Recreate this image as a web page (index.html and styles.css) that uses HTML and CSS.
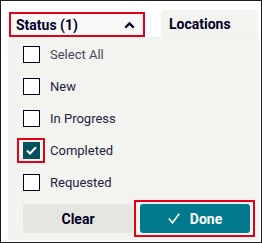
FILE: index.html
```html
<!DOCTYPE html>
<html lang="en">
<head>
    <meta charset="UTF-8">
    <title>Status filter</title>
    <link rel="stylesheet" href="styles.css">
</head>
<body>
    <div class="frame">
        <!-- Filter tabs -->
        <div class="tabs">
            <div class="tab tab-open">
                <span>Status (1)</span>
                <svg class="chevron" width="11" height="8" viewBox="0 0 11 8">
                    <path d="M1.3 6.6 L5.5 2.4 L9.7 6.6" fill="none" stroke="#000028" stroke-width="2.2"/>
                </svg>
            </div>
            <div class="tab tab-closed">Locations</div>
        </div>

        <!-- Dropdown panel -->
        <div class="panel">
            <label class="row">
                <span class="box"></span>
                <span class="label muted">Select All</span>
            </label>
            <label class="row">
                <span class="box"></span>
                <span class="label">New</span>
            </label>
            <label class="row">
                <span class="box"></span>
                <span class="label">In Progress</span>
            </label>
            <label class="row">
                <span class="box checked marked">
                    <svg width="11" height="9" viewBox="0 0 11 9">
                        <path d="M1 4.5 L4 7.5 L10 1.2" fill="none" stroke="#fff" stroke-width="2"/>
                    </svg>
                </span>
                <span class="label">Completed</span>
            </label>
            <label class="row">
                <span class="box"></span>
                <span class="label">Requested</span>
            </label>

            <div class="actions">
                <button class="btn btn-clear">Clear</button>
                <span class="done-wrap">
                    <button class="btn btn-done">
                        <svg width="12" height="11" viewBox="0 0 12 11">
                            <path d="M0.8 5.6 L4.4 9.8 L11.2 0.8" fill="none" stroke="#fff" stroke-width="1.6"/>
                        </svg>
                        Done
                    </button>
                </span>
            </div>
        </div>
    </div>
</body>
</html>
```

FILE: styles.css
```css
body {
    margin: 0;
    background-color: #fff;
    font-family: "Roboto", "Liberation Sans", sans-serif;
    color: #000028;
}

.frame {
    width: 262px;
    height: 243px;
    box-sizing: border-box;
    border: 1px solid #1e1e1e;
    background-color: #fff;
}

.tabs {
    display: flex;
    align-items: flex-end;
    gap: 16px;
    margin-top: 9px;
    padding-left: 8px;
}

.tab {
    display: flex;
    align-items: center;
    box-sizing: border-box;
    font-size: 14px;
    font-weight: bold;
}

.tab-open {
    width: 136px;
    height: 25px;
    justify-content: space-between;
    padding: 0 8px 0 5px;
    border: 2px solid #e2001a;
    background-color: #f8f8f6;
}

.chevron {
    display: block;
}

.tab-closed {
    width: 97px;
    height: 27px;
    padding-left: 8px;
    background-color: #f3f3f0;
    border-radius: 4px 4px 0 0;
}

.panel {
    width: 249px;
    height: 201px;
    box-sizing: border-box;
    margin: 1px 0 0 8px;
    padding: 0 3px 0 14px;
    background-color: #f3f3f0;
    box-shadow: 0 0 2px rgba(0, 0, 0, 0.18);
}

.row {
    display: flex;
    align-items: center;
    gap: 10px;
    height: 32px;
    font-size: 13px;
}

.box {
    position: relative;
    display: flex;
    align-items: center;
    justify-content: center;
    width: 17px;
    height: 17px;
    box-sizing: border-box;
    border: 1px solid #000028;
    background-color: #fff;
}

.box.checked {
    background-color: #005159;
    border-color: #005159;
}

.marked::after {
    content: "";
    position: absolute;
    top: -5px;
    left: -7px;
    right: -6px;
    bottom: -5px;
    border: 2px solid #e2001a;
}

.label {
    color: #23233d;
}

.muted {
    color: #4a4a60;
}

.actions {
    display: flex;
    align-items: center;
    gap: 1px;
    margin-top: 2px;
}

.btn {
    height: 29px;
    width: 110px;
    border: none;
    border-radius: 3px;
    font-family: inherit;
    font-size: 14px;
    font-weight: bold;
}

.btn-clear {
    background-color: #e6e6e1;
    color: #000028;
}

.done-wrap {
    display: flex;
    padding: 2px 3px 2px 4px;
    border: 2px solid #e2001a;
}

.btn-done {
    display: flex;
    align-items: center;
    justify-content: center;
    gap: 10px;
    background-color: #007a8c;
    color: #fff;
}
```
